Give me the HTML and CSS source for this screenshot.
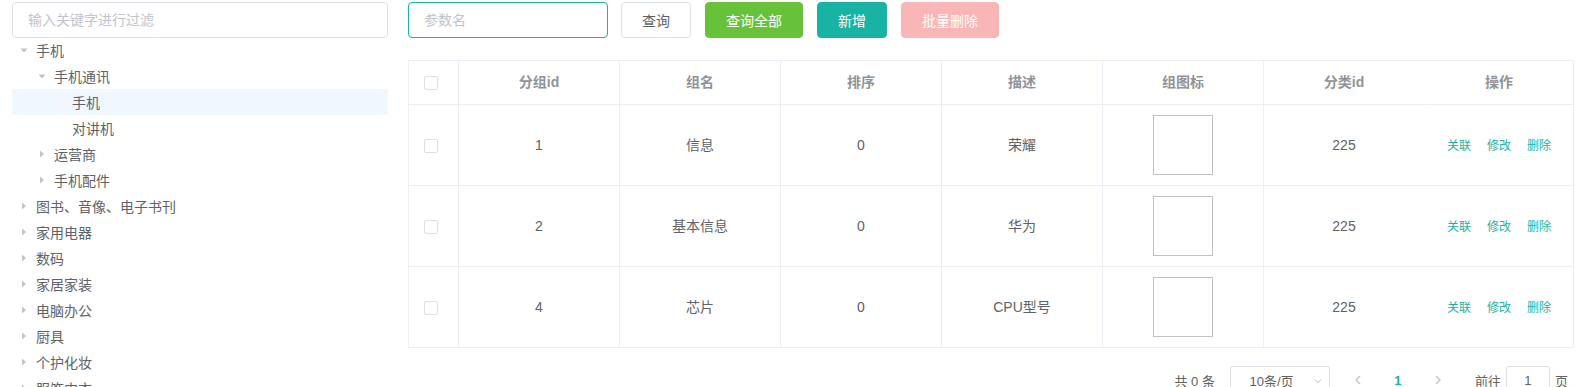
FILE: index.html
```html
<!DOCTYPE HTML>
<html>
    <head>
        <meta http-equiv="Content-Type" content="text/html; charset=UTF-8" />
        <title>属性分组</title>
        <link rel="stylesheet" href="styles.css">
    </head>
    <body>
        <div class="page">
            <aside class="side">
                <input class="filter" type="text" placeholder="输入关键字进行过滤">
                <ul class="tree">
                    <li class="node lv1"><span class="caret"><svg width="12" height="12" viewBox="0 0 12 12"><polygon points="2.5,4.5 9.5,4.5 6,8.5" fill="#c0c4cc"/></svg></span>手机</li>
                    <li class="node lv2"><span class="caret"><svg width="12" height="12" viewBox="0 0 12 12"><polygon points="2.5,4.5 9.5,4.5 6,8.5" fill="#c0c4cc"/></svg></span>手机通讯</li>
                    <li class="node lv3 current"><span class="caret"></span>手机</li>
                    <li class="node lv3"><span class="caret"></span>对讲机</li>
                    <li class="node lv2"><span class="caret"><svg width="12" height="12" viewBox="0 0 12 12"><polygon points="4,2.5 8,6 4,9.5" fill="#c0c4cc"/></svg></span>运营商</li>
                    <li class="node lv2"><span class="caret"><svg width="12" height="12" viewBox="0 0 12 12"><polygon points="4,2.5 8,6 4,9.5" fill="#c0c4cc"/></svg></span>手机配件</li>
                    <li class="node lv1"><span class="caret"><svg width="12" height="12" viewBox="0 0 12 12"><polygon points="4,2.5 8,6 4,9.5" fill="#c0c4cc"/></svg></span>图书、音像、电子书刊</li>
                    <li class="node lv1"><span class="caret"><svg width="12" height="12" viewBox="0 0 12 12"><polygon points="4,2.5 8,6 4,9.5" fill="#c0c4cc"/></svg></span>家用电器</li>
                    <li class="node lv1"><span class="caret"><svg width="12" height="12" viewBox="0 0 12 12"><polygon points="4,2.5 8,6 4,9.5" fill="#c0c4cc"/></svg></span>数码</li>
                    <li class="node lv1"><span class="caret"><svg width="12" height="12" viewBox="0 0 12 12"><polygon points="4,2.5 8,6 4,9.5" fill="#c0c4cc"/></svg></span>家居家装</li>
                    <li class="node lv1"><span class="caret"><svg width="12" height="12" viewBox="0 0 12 12"><polygon points="4,2.5 8,6 4,9.5" fill="#c0c4cc"/></svg></span>电脑办公</li>
                    <li class="node lv1"><span class="caret"><svg width="12" height="12" viewBox="0 0 12 12"><polygon points="4,2.5 8,6 4,9.5" fill="#c0c4cc"/></svg></span>厨具</li>
                    <li class="node lv1"><span class="caret"><svg width="12" height="12" viewBox="0 0 12 12"><polygon points="4,2.5 8,6 4,9.5" fill="#c0c4cc"/></svg></span>个护化妆</li>
                    <li class="node lv1"><span class="caret"><svg width="12" height="12" viewBox="0 0 12 12"><polygon points="4,2.5 8,6 4,9.5" fill="#c0c4cc"/></svg></span>服饰内衣</li>
                </ul>
            </aside>

            <main class="main">
                <div class="toolbar">
                    <input class="query" type="text" placeholder="参数名">
                    <button class="btn">查询</button>
                    <button class="btn btn-green">查询全部</button>
                    <button class="btn btn-teal">新增</button>
                    <button class="btn btn-red-off">批量删除</button>
                </div>

                <table class="grid">
                    <colgroup>
                        <col style="width:50px">
                        <col style="width:161px">
                        <col style="width:161px">
                        <col style="width:161px">
                        <col style="width:161px">
                        <col style="width:161px">
                        <col style="width:161px">
                        <col style="width:149px">
                    </colgroup>
                    <thead>
                        <tr>
                            <th class="sel"><span class="check"></span></th>
                            <th>分组id</th>
                            <th>组名</th>
                            <th>排序</th>
                            <th>描述</th>
                            <th>组图标</th>
                            <th class="no-rb">分类id</th>
                            <th>操作</th>
                        </tr>
                    </thead>
                    <tbody>
                        <tr>
                            <td class="sel"><span class="check"></span></td>
                            <td>1</td>
                            <td>信息</td>
                            <td>0</td>
                            <td>荣耀</td>
                            <td><span class="icon-box"></span></td>
                            <td class="no-rb">225</td>
                            <td><div class="ops"><a>关联</a><a>修改</a><a>删除</a></div></td>
                        </tr>
                        <tr>
                            <td class="sel"><span class="check"></span></td>
                            <td>2</td>
                            <td>基本信息</td>
                            <td>0</td>
                            <td>华为</td>
                            <td><span class="icon-box"></span></td>
                            <td class="no-rb">225</td>
                            <td><div class="ops"><a>关联</a><a>修改</a><a>删除</a></div></td>
                        </tr>
                        <tr>
                            <td class="sel"><span class="check"></span></td>
                            <td>4</td>
                            <td>芯片</td>
                            <td>0</td>
                            <td>CPU型号</td>
                            <td><span class="icon-box"></span></td>
                            <td class="no-rb">225</td>
                            <td><div class="ops"><a>关联</a><a>修改</a><a>删除</a></div></td>
                        </tr>
                    </tbody>
                </table>

                <div class="pager">
                    <span class="total">共 0 条</span>
                    <div class="sizes">
                        <span>10条/页</span>
                        <svg class="arrow" width="10" height="10" viewBox="0 0 10 10"><polyline points="1.5,3.5 5,6.5 8.5,3.5" fill="none" stroke="#c0c4cc" stroke-width="1"/></svg>
                    </div>
                    <span class="nav"><svg width="10" height="12" viewBox="0 0 10 12"><polyline points="7,2 3,6 7,10" fill="none" stroke="#c0c4cc" stroke-width="1.4"/></svg></span>
                    <span class="num">1</span>
                    <span class="nav"><svg width="10" height="12" viewBox="0 0 10 12"><polyline points="3,2 7,6 3,10" fill="none" stroke="#c0c4cc" stroke-width="1.4"/></svg></span>
                    <span class="goto">前往</span>
                    <span class="goto-input">1</span>
                    <span>页</span>
                </div>
            </main>
        </div>
    </body>
</html>
```

FILE: styles.css
```css
html, body {
    margin: 0;
    overflow: hidden;
}

body {
    font-family: "Liberation Sans", "Noto Sans CJK SC", sans-serif;
    font-size: 14px;
    color: #606266;
    background: #fff;
}

.page {
    display: flex;
    gap: 20px;
    padding: 2px 0 0 12px;
}

.side {
    width: 376px;
    flex: none;
}

.filter, .query {
    display: block;
    box-sizing: border-box;
    height: 36px;
    padding: 0 15px;
    border: 1px solid #dcdfe6;
    border-radius: 4px;
    font: inherit;
    color: #606266;
    outline: none;
}

.filter {
    width: 100%;
}

.filter::placeholder, .query::placeholder {
    color: #c0c4cc;
}

.tree {
    list-style: none;
    margin: -1px 0 0;
    padding: 0;
}

.node {
    display: flex;
    align-items: center;
    height: 26px;
    white-space: nowrap;
}

.node.lv2 { padding-left: 18px; }
.node.lv3 { padding-left: 36px; }

.node.current {
    background: #f0f7ff;
}

.caret {
    display: flex;
    align-items: center;
    justify-content: center;
    width: 24px;
    height: 26px;
    flex: none;
}

.main {
    width: 1166px;
    flex: none;
}

.toolbar {
    display: flex;
    gap: 14px;
}

.query {
    width: 200px;
    border-color: #18b3a3;
    margin-right: -1px;
}

.btn {
    height: 36px;
    padding: 0 20px;
    border: 1px solid #dcdfe6;
    border-radius: 4px;
    background: #fff;
    color: #606266;
    font: inherit;
    cursor: pointer;
}

.btn-green {
    background: #67c23a;
    border-color: #67c23a;
    color: #fff;
}

.btn-teal {
    background: #18b3a3;
    border-color: #18b3a3;
    color: #fff;
}

.btn-red-off {
    background: #fab6b6;
    border-color: #fab6b6;
    color: #fff;
}

.grid {
    margin-top: 22px;
    width: 1166px;
    table-layout: fixed;
    border-collapse: separate;
    border-spacing: 0;
    border-top: 1px solid #ebeef5;
    border-left: 1px solid #ebeef5;
}

.grid th, .grid td {
    border-right: 1px solid #ebeef5;
    border-bottom: 1px solid #ebeef5;
    text-align: center;
    padding: 10px 0;
    line-height: 23px;
    vertical-align: middle;
}

.grid th {
    color: #909399;
    font-weight: bold;
}

.grid td {
    height: 60px;
}

.grid .no-rb {
    border-right-color: transparent;
}

.grid .sel {
    text-align: left;
    padding-left: 15px;
}

.check {
    display: inline-block;
    width: 14px;
    height: 14px;
    box-sizing: border-box;
    border: 1px solid #dcdfe6;
    border-radius: 2px;
    vertical-align: middle;
}

.icon-box {
    display: block;
    width: 60px;
    height: 60px;
    box-sizing: border-box;
    margin: 0 auto;
    border: 1px solid #c0c0c0;
}

.ops {
    display: flex;
    justify-content: center;
    gap: 16px;
    font-size: 12px;
    padding-top: 3px;
}

.ops a {
    color: #18b3a3;
}

.pager {
    display: flex;
    align-items: center;
    justify-content: flex-end;
    height: 28px;
    margin-top: 18px;
    padding-right: 6px;
    font-size: 13px;
    color: #606266;
}

.total {
    margin-right: 15px;
}

.sizes {
    position: relative;
    box-sizing: border-box;
    width: 100px;
    height: 28px;
    padding: 0 25px 0 8px;
    border: 1px solid #dcdfe6;
    border-radius: 3px;
    display: flex;
    align-items: center;
    justify-content: center;
    margin-right: 10px;
}

.sizes .arrow {
    position: absolute;
    right: 6px;
    top: 9px;
}

.nav {
    width: 36px;
    height: 28px;
    display: flex;
    align-items: center;
    justify-content: center;
}

.num {
    width: 44px;
    text-align: center;
    font-weight: bold;
    color: #18b3a3;
}

.goto {
    margin-left: 19px;
}

.goto-input {
    box-sizing: border-box;
    width: 44px;
    height: 28px;
    margin: 0 5px;
    border: 1px solid #dcdfe6;
    border-radius: 3px;
    display: flex;
    align-items: center;
    justify-content: center;
}
```
